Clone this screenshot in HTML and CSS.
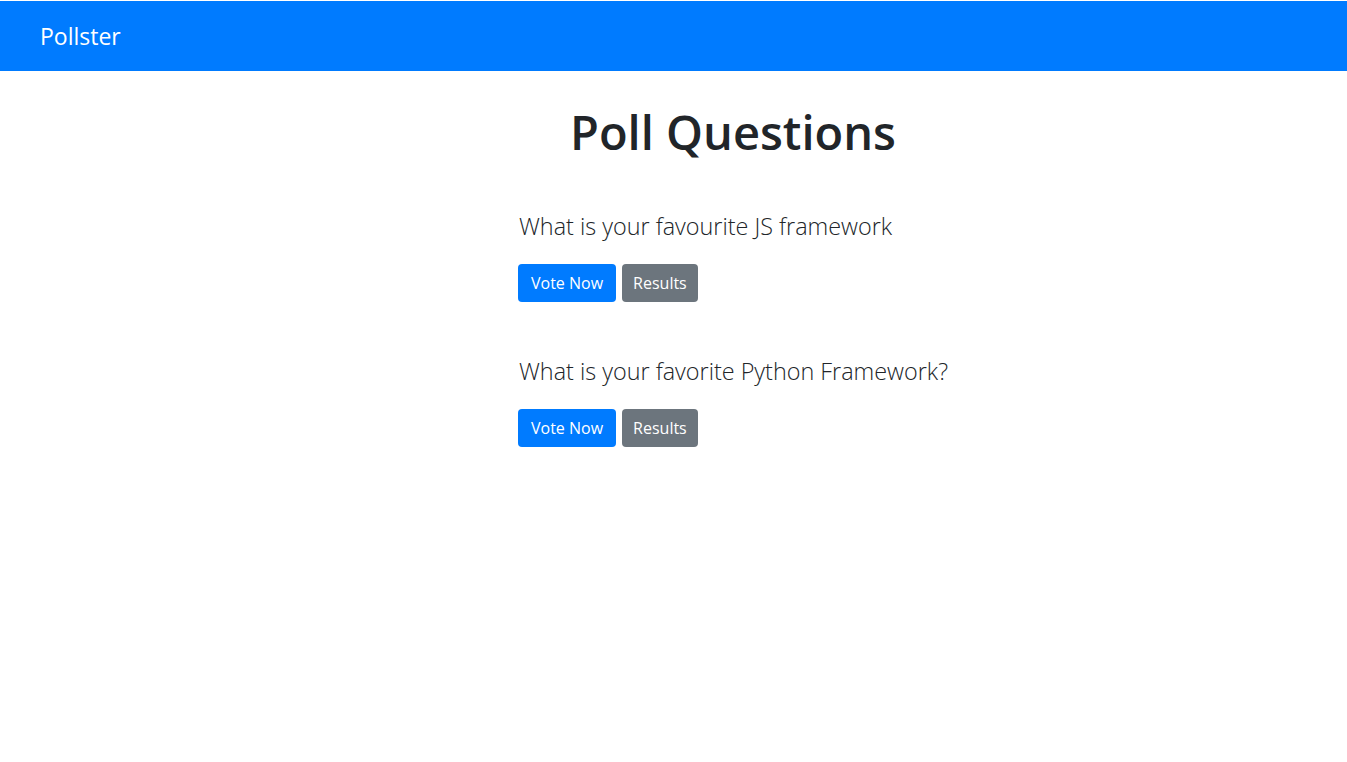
FILE: index.html
```html
<!DOCTYPE html>
<html lang="en">
<head>
<meta charset="utf-8">
<title>Pollster</title>
<link rel="stylesheet" href="styles.css">
</head>
<body>
<nav class="navbar">
  <a class="brand" href="#">Pollster</a>
</nav>
<main class="page">
  <section class="column">
    <h1 class="title">Poll Questions</h1>
    <ul class="polls">
      <li class="poll">
        <h4 class="question">What is your favourite JS framework</h4>
        <div class="actions">
          <a class="btn btn-primary" href="#">Vote Now</a>
          <a class="btn btn-secondary" href="#">Results</a>
        </div>
      </li>
      <li class="poll">
        <h4 class="question">What is your favorite Python Framework?</h4>
        <div class="actions">
          <a class="btn btn-primary" href="#">Vote Now</a>
          <a class="btn btn-secondary" href="#">Results</a>
        </div>
      </li>
    </ul>
  </section>
</main>
</body>
</html>
```
FILE: styles.css
```css
* { box-sizing: border-box; }
html, body { margin: 0; padding: 0; }
body {
  font-family: "Open Sans", "Noto Sans", sans-serif;
  color: #212529;
  background: #fff;
  padding-top: 1px;
}
.navbar {
  background: #007bff;
  height: 70px;
  display: flex;
  align-items: center;
  padding: 0 40px;
}
.brand {
  color: #fff;
  text-decoration: none;
  font-size: 23px;
  line-height: 1;
}
.page {
  display: flex;
  justify-content: center;
}
.column {
  width: 430px;
  margin-left: 119px;
  padding-top: 33px;
}
.title {
  margin: 0;
  text-align: center;
  font-size: 47px;
  font-weight: 600;
  line-height: 57px;
}
.polls {
  list-style: none;
  margin: 51px 0 0;
  padding: 0;
  display: flex;
  flex-direction: column;
  gap: 55px;
}
.question {
  margin: 0 0 23px;
  font-size: 23.4px;
  font-weight: 300;
  line-height: 29px;
  padding-left: 1px;
}
.actions {
  display: flex;
  gap: 6px;
}
.btn {
  display: inline-block;
  height: 38px;
  padding: 0 12px;
  border-radius: 4px;
  color: #fff;
  text-decoration: none;
  font-size: 16px;
  line-height: 38px;
}
.btn-primary { background: #007bff; padding: 0 13px; }
.btn-secondary { background: #6c757d; padding: 0 11px; }
```
